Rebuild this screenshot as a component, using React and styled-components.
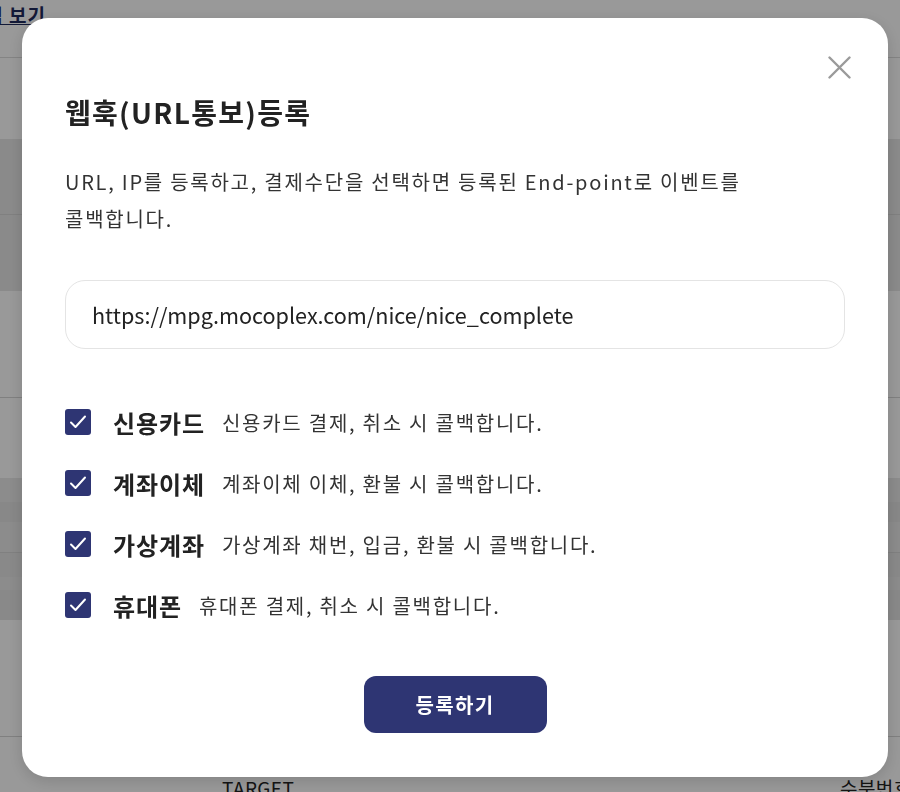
import styled, { createGlobalStyle } from "styled-components"

const GlobalStyle = createGlobalStyle`
    * { box-sizing: border-box; }
    html, body { margin: 0; padding: 0; }
    body {
        font-family: "Noto Sans CJK KR", "Noto Sans", sans-serif;
        background: #ffffff;
        overflow: hidden;
    }
`

const Page = styled.div`
    width: 900px;
    height: 792px;
    display: flex;
    flex-direction: column;
`

const TopBar = styled.div`
    height: 58px;
    border-bottom: 1px solid #dcdcdc;
    display: flex;
`

const LinkClip = styled.div`
    width: 46px;
    overflow: hidden;
    display: flex;
    justify-content: flex-end;
    white-space: nowrap;
`

const MoreLink = styled.a`
    font-size: 19px;
    font-weight: 700;
    color: #1f2a5c;
    text-decoration: underline;
    line-height: 30px;
    letter-spacing: 1px;
`

const Band = styled.div`
    height: ${(p) => p.h}px;
    background: ${(p) => (p.shade ? p.shade : "#ffffff")};
    border-bottom: ${(p) => (p.line ? "1px solid #d6d6d6" : "none")};
    flex-shrink: 0;
`

const HeadRow = styled.div`
    flex: 1;
    display: flex;
    align-items: flex-end;
    font-size: 19px;
    font-weight: 400;
    color: #222;
`

const HeadCell = styled.div`
    width: ${(p) => p.w}px;
    white-space: nowrap;
    overflow: hidden;
    line-height: 24px;
    margin-bottom: -8px;
    letter-spacing: 0.4px;
`

const Overlay = styled.div`
    position: fixed;
    inset: 0;
    background: rgba(0, 0, 0, 0.4);
    display: flex;
    align-items: center;
    justify-content: center;
    padding-left: 10px;
    padding-top: 3px;
`

const Modal = styled.div`
    position: relative;
    width: 866px;
    background: #ffffff;
    border-radius: 26px;
    padding: 76px 43px 44px;
    display: flex;
    flex-direction: column;
    box-shadow: 0 4px 16px rgba(0, 0, 0, 0.15);
`

const CloseButton = styled.button`
    position: absolute;
    top: 38px;
    right: 37px;
    width: 23px;
    height: 23px;
    padding: 0;
    border: none;
    background: none;
    cursor: pointer;
    display: flex;
`

const Title = styled.h2`
    margin: 0;
    font-size: 28px;
    font-weight: 700;
    line-height: 36px;
    color: #222;
    letter-spacing: 1.3px;
`

const Desc = styled.p`
    margin: 33px 0 0;
    font-size: 20px;
    line-height: 37px;
    color: #333;
    letter-spacing: 1.75px;
`

const UrlInput = styled.input`
    margin-top: 43px;
    height: 69px;
    width: 100%;
    border: 1px solid #e4e4e4;
    border-radius: 20px;
    padding: 0 26px;
    font-family: "Noto Sans CJK KR", "Noto Sans", sans-serif;
    font-size: 21.6px;
    color: #222;
    outline: none;
`

const OptionList = styled.div`
    margin-top: 58px;
    display: flex;
    flex-direction: column;
    gap: 31px;
`

const Option = styled.label`
    display: flex;
    align-items: center;
    height: 30px;
`

const Box = styled.span`
    width: 26px;
    height: 26px;
    border-radius: 3px;
    background: #2e3573;
    display: flex;
    align-items: center;
    justify-content: center;
    flex-shrink: 0;
`

const OptionName = styled.span`
    margin-left: 22px;
    font-size: 24px;
    font-weight: 700;
    color: #222;
    letter-spacing: 0.9px;
`

const OptionDesc = styled.span`
    margin-left: 17px;
    font-size: 20px;
    color: #333;
    letter-spacing: 1.75px;
`

const SubmitButton = styled.button`
    margin: 56px auto 0;
    width: 183px;
    height: 57px;
    border: none;
    border-radius: 12px;
    background: #2e3573;
    color: #ffffff;
    font-family: "Noto Sans CJK KR", "Noto Sans", sans-serif;
    font-size: 20px;
    font-weight: 700;
    letter-spacing: 1.3px;
    cursor: pointer;
`

const options = [
    { name: "신용카드", desc: "신용카드 결제, 취소 시 콜백합니다." },
    { name: "계좌이체", desc: "계좌이체 이체, 환불 시 콜백합니다." },
    { name: "가상계좌", desc: "가상계좌 채번, 입금, 환불 시 콜백합니다." },
    { name: "휴대폰", desc: "휴대폰 결제, 취소 시 콜백합니다." },
]

const bands = [
    { h: 81 },
    { h: 76, shade: "#e7e7e7", line: true },
    { h: 76, shade: "#e7e7e7" },
    { h: 107, line: true },
    { h: 80 },
    { h: 24, shade: "#e9e9e9" },
    { h: 20, shade: "#e3e3e3" },
    { h: 31, shade: "#e9e9e9", line: true },
    { h: 24, shade: "#e5e5e5" },
    { h: 13, shade: "#e9e9e9" },
    { h: 30, shade: "#e5e5e5" },
    { h: 117, line: true },
]

const Check = () => (
    <svg width="20" height="20" viewBox="0 0 20 20">
        <polyline points="3,10.5 7.5,15 17,4.5" fill="none" stroke="#fff" strokeWidth="2" strokeLinecap="round" strokeLinejoin="round" />
    </svg>
)

const App = () => {
    return (
        <>
            <GlobalStyle />
            <Page>
                <TopBar>
                    <LinkClip>
                        <MoreLink>내역 보기</MoreLink>
                    </LinkClip>
                </TopBar>
                {bands.map((b, i) => (
                    <Band key={i} h={b.h} shade={b.shade} line={b.line} />
                ))}
                <HeadRow>
                    <HeadCell w={222} />
                    <HeadCell w={618}>TARGET</HeadCell>
                    <HeadCell w={60}>수분번호</HeadCell>
                </HeadRow>
            </Page>
            <Overlay>
                <Modal>
                    <CloseButton aria-label="닫기">
                        <svg width="23" height="23" viewBox="0 0 23 23">
                            <path d="M1.5 1.5 L21.5 21.5 M21.5 1.5 L1.5 21.5" stroke="#9a9a9a" strokeWidth="2.4" strokeLinecap="round" />
                        </svg>
                    </CloseButton>
                    <Title>웹훅(URL통보)등록</Title>
                    <Desc>
                        URL, IP를 등록하고, 결제수단을 선택하면 등록된 End-point로 이벤트를
                        <br />
                        콜백합니다.
                    </Desc>
                    <UrlInput type="text" defaultValue="https://mpg.mocoplex.com/nice/nice_complete" />
                    <OptionList>
                        {options.map((o) => (
                            <Option key={o.name}>
                                <Box>
                                    <Check />
                                </Box>
                                <OptionName>{o.name}</OptionName>
                                <OptionDesc>{o.desc}</OptionDesc>
                            </Option>
                        ))}
                    </OptionList>
                    <SubmitButton>등록하기</SubmitButton>
                </Modal>
            </Overlay>
        </>
    )
}

export default App
